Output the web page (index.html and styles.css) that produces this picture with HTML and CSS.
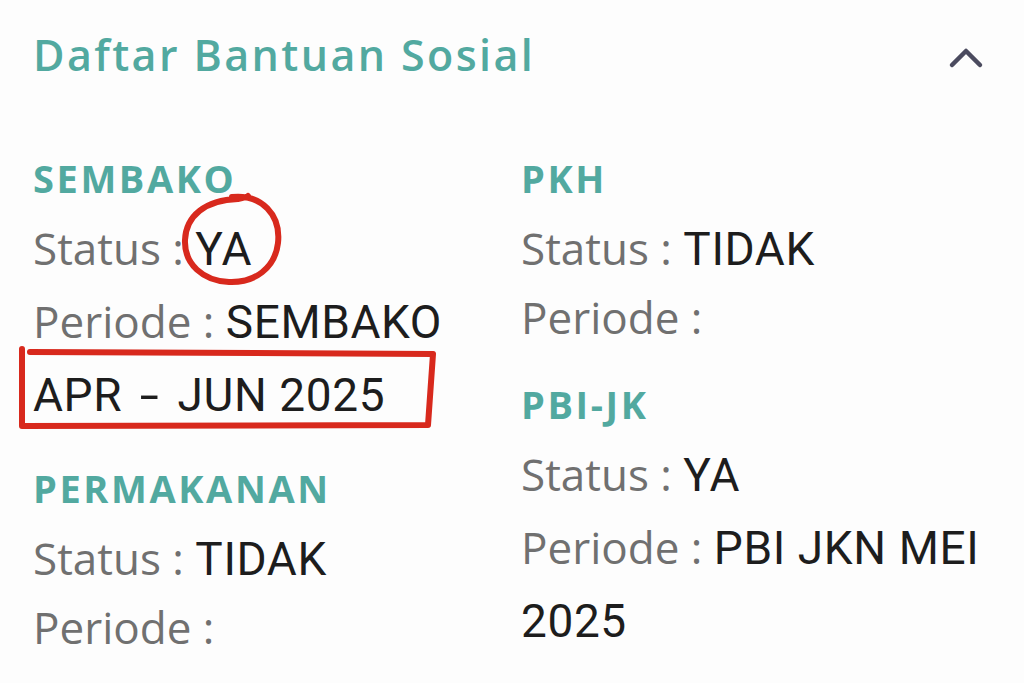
FILE: index.html
```html
<!DOCTYPE html>
<html lang="id">
<head>
<meta charset="utf-8">
<title>Daftar Bantuan Sosial</title>
<link rel="stylesheet" href="styles.css">
</head>
<body>
<section class="card">
  <header class="card-head">
    <h1 class="title">Daftar Bantuan Sosial</h1>
    <svg class="chevron" width="44" height="30" viewBox="0 0 44 30" aria-hidden="true">
      <polyline points="7,23 21,9 35,23" fill="none" stroke="#4b4b5f" stroke-width="4.5" stroke-linecap="round" stroke-linejoin="round"/>
    </svg>
  </header>
  <div class="grid">
    <div class="col">
      <div class="item">
        <h2 class="name">SEMBAKO</h2>
        <div class="row">Status : <span class="val">YA</span></div>
        <div class="row">Periode : <span class="val">SEMBAKO APR <span class="sep">-</span> JUN 2025</span></div>
      </div>
      <div class="item">
        <h2 class="name">PERMAKANAN</h2>
        <div class="row">Status : <span class="val">TIDAK</span></div>
        <div class="row">Periode : </div>
      </div>
    </div>
    <div class="col">
      <div class="item">
        <h2 class="name">PKH</h2>
        <div class="row">Status : <span class="val">TIDAK</span></div>
        <div class="row">Periode : </div>
      </div>
      <div class="item">
        <h2 class="name">PBI-JK</h2>
        <div class="row">Status : <span class="val">YA</span></div>
        <div class="row">Periode : <span class="val">PBI JKN MEI 2025</span></div>
      </div>
    </div>
  </div>
</section>
<svg class="marks" width="1024" height="683" viewBox="0 0 1024 683" aria-hidden="true">
  <path d="M232,197 C262,194 281,215 278,243 C275,268 255,283 229,282 C203,281 184,264 185,240 C186,216 205,200 238,199 C244,198 247,197 248,196" fill="none" stroke="#d8291d" stroke-width="6" stroke-linecap="round"/>
  <path d="M22,349 L22,426 L428,425 L433,354 L30,352" fill="none" stroke="#d8291d" stroke-width="6" stroke-linecap="round" stroke-linejoin="round"/>
</svg>
</body>
</html>
```

FILE: styles.css
```css
html, body {
  margin: 0;
  padding: 0;
  background: #fdfdfd;
}

body {
  width: 1024px;
  height: 683px;
  overflow: hidden;
  position: relative;
}

.card {
  padding: 25px 33px 0 33px;
}

.card-head {
  display: flex;
  align-items: center;
  justify-content: space-between;
  height: 60px;
  margin-bottom: 65px;
}

.title {
  margin: 0;
  font-family: "Open Sans", sans-serif;
  font-weight: 600;
  font-size: 43px;
  line-height: 60px;
  color: #52a9a0;
  letter-spacing: 2.4px;
}

.chevron {
  margin-right: 2px;
  margin-top: 4px;
}

.grid {
  display: grid;
  grid-template-columns: 1fr 1fr;
  column-gap: 18px;
}

.col {
  display: flex;
  flex-direction: column;
  gap: 28px;
}

.name {
  margin: 0 0 7px 0;
  font-family: "Open Sans", sans-serif;
  font-weight: 700;
  font-size: 38px;
  line-height: 56px;
  color: #52a9a0;
  letter-spacing: 2.6px;
}

.row {
  font-family: "Open Sans", sans-serif;
  font-weight: 400;
  font-size: 44px;
  line-height: 62px;
  color: #707070;
}

.val {
  font-family: Roboto, "Liberation Sans", sans-serif;
  font-weight: 400;
  font-size: 46px;
  line-height: 73px;
  color: #1d1d1d;
  letter-spacing: 0.6px;
}

.sep {
  display: inline-block;
  margin: 0 9px;
  transform: scaleX(1.5);
}

.marks {
  position: absolute;
  left: 0;
  top: 0;
  pointer-events: none;
}
```
